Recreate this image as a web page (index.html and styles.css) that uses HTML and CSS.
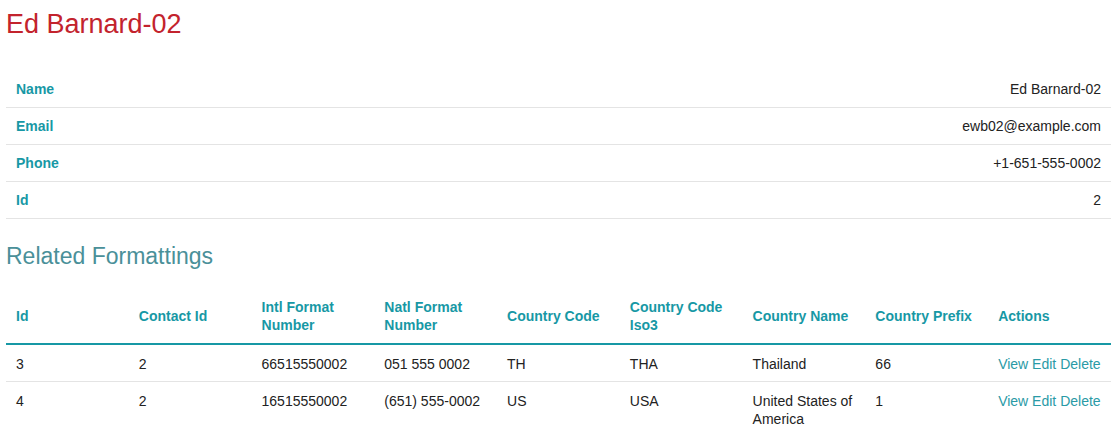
FILE: index.html
```html
<!DOCTYPE html>
<html>
<head>
<meta charset="utf-8">
<link rel="stylesheet" href="styles.css">
</head>
<body>
<div class="page">
  <h3 class="title">Ed Barnard-02</h3>
  <table class="vertical-table">
    <tr><th>Name</th><td>Ed Barnard-02</td></tr>
    <tr><th>Email</th><td>ewb02@example.com</td></tr>
    <tr><th>Phone</th><td>+1-651-555-0002</td></tr>
    <tr><th>Id</th><td>2</td></tr>
  </table>
  <h4 class="related-title">Related Formattings</h4>
  <table class="related-table">
    <thead>
      <tr>
        <th>Id</th>
        <th>Contact Id</th>
        <th>Intl Format Number</th>
        <th>Natl Format Number</th>
        <th>Country Code</th>
        <th>Country Code Iso3</th>
        <th>Country Name</th>
        <th>Country Prefix</th>
        <th>Actions</th>
      </tr>
    </thead>
    <tbody>
      <tr>
        <td>3</td><td>2</td><td>66515550002</td><td>051 555 0002</td><td>TH</td><td>THA</td><td>Thailand</td><td>66</td>
        <td class="actions"><a href="#">View</a> <a href="#">Edit</a> <a href="#">Delete</a></td>
      </tr>
      <tr>
        <td>4</td><td>2</td><td>16515550002</td><td>(651) 555-0002</td><td>US</td><td>USA</td><td>United States of America</td><td>1</td>
        <td class="actions"><a href="#">View</a> <a href="#">Edit</a> <a href="#">Delete</a></td>
      </tr>
    </tbody>
  </table>
</div>
</body>
</html>
```
FILE: styles.css
```css
* { box-sizing: border-box; }
html, body { margin: 0; padding: 0; background: #fff; }
body {
  font-family: "Liberation Sans", Arial, Helvetica, sans-serif;
  font-size: 14px;
  color: #222;
}
.page { padding: 0 1px 0 6px; }
.title {
  margin: 0;
  padding-top: 8px;
  font-size: 27px;
  line-height: 32px;
  font-weight: normal;
  color: #c3232d;
  margin-bottom: 31px;
}
table { width: 100%; border-collapse: collapse; border-spacing: 0; }
th, td { padding: 9px 10px; line-height: 18px; vertical-align: top; }
.vertical-table tr { border-bottom: 1px solid #e4e4e4; }
.vertical-table th {
  text-align: left;
  color: #1798a5;
  font-weight: bold;
}
.vertical-table td { text-align: right; }
.related-title {
  margin: 23px 0 19px;
  font-size: 23px;
  line-height: 28px;
  font-weight: normal;
  color: #4a9099;
}
.related-table { table-layout: fixed; }
.related-table thead tr { border-bottom: 2px solid #1798a5; }
.related-table th {
  text-align: left;
  vertical-align: middle;
  color: #1798a5;
  font-weight: bold;
}
.related-table td { padding: 10px 10px 8px; }
.related-table tbody tr { border-bottom: 1px solid #e4e4e4; }
.related-table tbody tr:last-child { border-bottom: none; }
.actions a { color: #2a9aa6; text-decoration: none; }
```
